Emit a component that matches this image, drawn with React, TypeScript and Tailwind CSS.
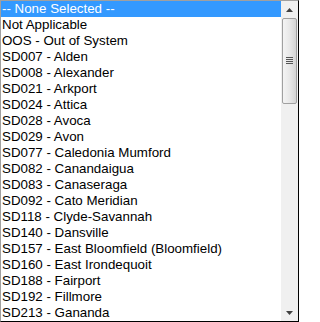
import React from "react";

const items = [
  "-- None Selected --",
  "Not Applicable",
  "OOS - Out of System",
  "SD007 - Alden",
  "SD008 - Alexander",
  "SD021 - Arkport",
  "SD024 - Attica",
  "SD028 - Avoca",
  "SD029 - Avon",
  "SD077 - Caledonia Mumford",
  "SD082 - Canandaigua",
  "SD083 - Canaseraga",
  "SD092 - Cato Meridian",
  "SD118 - Clyde-Savannah",
  "SD140 - Dansville",
  "SD157 - East Bloomfield (Bloomfield)",
  "SD160 - East Irondequoit",
  "SD188 - Fairport",
  "SD192 - Fillmore",
  "SD213 - Gananda",
];

export default function App() {
  return (
    <div className="w-[299px] h-[322px] bg-white flex border-t border-l border-t-[#a0a0a0] border-l-[#a0a0a0] border-r border-b border-r-black border-b-black overflow-hidden">
      {/* options */}
      <div className="flex-1 min-w-0 flex flex-col font-['Liberation_Sans',Arial,sans-serif] text-[13.33px] text-black">
        {items.map((item, i) => (
          <div
            key={item}
            className={
              "h-4 leading-4 pl-[1px] whitespace-nowrap " +
              (i === 0 ? "bg-[#3399ff] text-white" : "")
            }
          >
            {item}
          </div>
        ))}
      </div>
      {/* scrollbar */}
      <div className="w-[17px] shrink-0 bg-[#f0f0f0] flex flex-col items-center">
        <div className="h-[17px] w-full flex items-center justify-center">
          <svg width="7" height="4" viewBox="0 0 7 4">
            <path d="M3.5 0 L7 4 L0 4 Z" fill="#404040" />
          </svg>
        </div>
        <div className="w-[15px] h-[86px] border border-[#a0a0a0] rounded-[2px] bg-gradient-to-r from-[#f4f4f4] via-[#e8e8e8] to-[#d4d4d4] flex items-center justify-center">
          <div className="flex flex-col gap-[1px] mt-[-2px]">
            <div className="w-[7px] h-[1px] bg-[#555]" />
            <div className="w-[7px] h-[1px] bg-[#555]" />
            <div className="w-[7px] h-[1px] bg-[#555]" />
            <div className="w-[7px] h-[1px] bg-[#555]" />
          </div>
        </div>
        <div className="flex-1" />
        <div className="h-[17px] w-full flex items-center justify-center">
          <svg width="7" height="4" viewBox="0 0 7 4">
            <path d="M0 0 L7 0 L3.5 4 Z" fill="#404040" />
          </svg>
        </div>
      </div>
    </div>
  );
}
